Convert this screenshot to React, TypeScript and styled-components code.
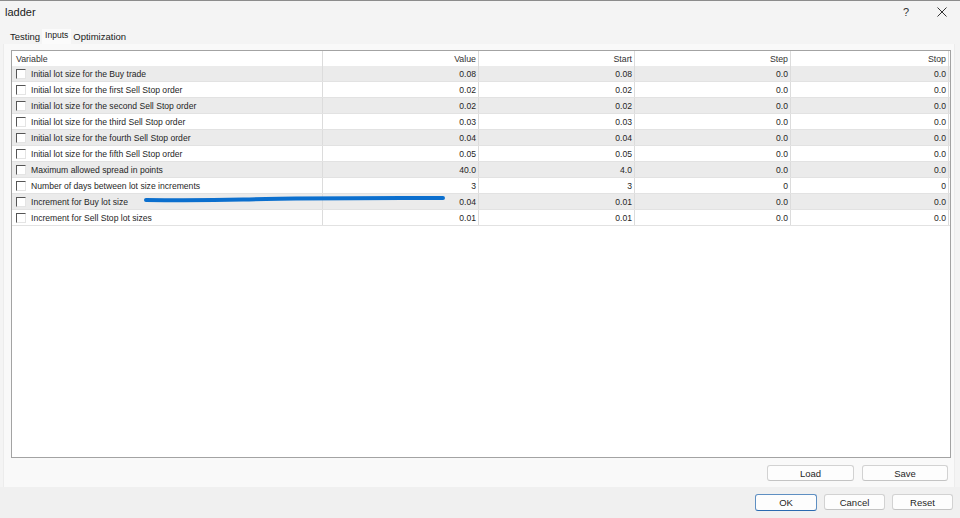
import styled, { createGlobalStyle } from "styled-components";

const GlobalStyle = createGlobalStyle`
  html, body {
    margin: 0;
    padding: 0;
    background: #f0f0f0;
  }
  body {
    font-family: "Liberation Sans", Arial, sans-serif;
    color: #1f1f1f;
  }
`;

type Row = {
  name: string;
  value: string;
  start: string;
  step: string;
  stop: string;
};

const rows: Row[] = [
  { name: "Initial lot size for the Buy trade", value: "0.08", start: "0.08", step: "0.0", stop: "0.0" },
  { name: "Initial lot size for the first Sell Stop order", value: "0.02", start: "0.02", step: "0.0", stop: "0.0" },
  { name: "Initial lot size for the second Sell Stop order", value: "0.02", start: "0.02", step: "0.0", stop: "0.0" },
  { name: "Initial lot size for the third Sell Stop order", value: "0.03", start: "0.03", step: "0.0", stop: "0.0" },
  { name: "Initial lot size for the fourth Sell Stop order", value: "0.04", start: "0.04", step: "0.0", stop: "0.0" },
  { name: "Initial lot size for the fifth Sell Stop order", value: "0.05", start: "0.05", step: "0.0", stop: "0.0" },
  { name: "Maximum allowed spread in points", value: "40.0", start: "4.0", step: "0.0", stop: "0.0" },
  { name: "Number of days between lot size increments", value: "3", start: "3", step: "0", stop: "0" },
  { name: "Increment for Buy lot size", value: "0.04", start: "0.01", step: "0.0", stop: "0.0" },
  { name: "Increment for Sell Stop lot sizes", value: "0.01", start: "0.01", step: "0.0", stop: "0.0" },
];

const Window = styled.div`
  width: 960px;
  height: 518px;
  box-sizing: border-box;
  border-top: 1px solid #8c8c8c;
  display: flex;
  flex-direction: column;
  background: #f4f4f4;
  overflow: hidden;
`;

const TitleBar = styled.div`
  height: 22px;
  display: flex;
  align-items: center;
  padding: 0 0 0 5px;
  font-size: 11px;
  color: #1a1a1a;
`;

const Title = styled.span`
  flex: 1;
`;

const TitleButton = styled.div`
  width: 36px;
  height: 22px;
  display: flex;
  align-items: center;
  justify-content: center;
  font-size: 11px;
  color: #333;
`;

const TabStrip = styled.div`
  height: 21px;
  display: flex;
  align-items: flex-end;
  padding-left: 8px;
`;

const Tab = styled.div<{ $active?: boolean }>`
  height: ${({ $active }) => ($active ? "16px" : "14px")};
  padding: ${({ $active }) => ($active ? "0 3px 2px" : "0 2px 0")};
  display: flex;
  align-items: ${({ $active }) => ($active ? "flex-start" : "center")};
  font-size: ${({ $active }) => ($active ? "8.5px" : "9.5px")};
  background: ${({ $active }) => ($active ? "#fbfbfb" : "transparent")};
  box-sizing: border-box;
  color: #1a1a1a;
  margin-bottom: ${({ $active }) => ($active ? "-1px" : "0")};
  line-height: 12px;
`;

const Panel = styled.div`
  margin: 0 5px 0 3px;
  height: 443px;
  box-sizing: border-box;
  background: #f9f9f9;
  border-left: 1px solid #ececec;
  border-right: 1px solid #ececec;
  padding: 6px 3px 0 7px;
  display: flex;
  flex-direction: column;
`;

const Table = styled.div`
  position: relative;
  width: 940px;
  height: 408px;
  box-sizing: border-box;
  border: 1px solid #a3a3a3;
  background: #ffffff;
  font-size: 8.6px;
`;

const Line = styled.div<{ $shade?: boolean }>`
  display: grid;
  grid-template-columns: 311px 156px 156px 156px 158px;
  height: 16px;
  box-sizing: border-box;
  border-bottom: 1px solid #e2e2e2;
  background: ${({ $shade }) => ($shade ? "#ebebeb" : "#ffffff")};
`;

const HeaderLine = styled(Line)`
  height: 15px;
  border-bottom: none;
  color: #333;
  font-size: 8.8px;
`;

const Cell = styled.div<{ $left?: boolean }>`
  display: flex;
  align-items: center;
  justify-content: ${({ $left }) => ($left ? "flex-start" : "flex-end")};
  padding: ${({ $left }) => ($left ? "0 0 0 4px" : "0 2px 0 0")};
  border-right: 1px solid #dcdcdc;
  white-space: nowrap;
  overflow: hidden;
`;

const Check = styled.span`
  width: 10px;
  height: 10px;
  box-sizing: border-box;
  border: 1px solid;
  border-color: #555555 #e4e4e4 #e4e4e4 #555555;
  background: #ffffff;
  margin-right: 5px;
  flex-shrink: 0;
`;

const Marker = styled.svg`
  position: absolute;
  left: 131px;
  top: 143px;
  pointer-events: none;
`;

const ButtonRow = styled.div<{ $gap: number }>`
  display: flex;
  justify-content: flex-end;
  gap: ${({ $gap }) => $gap}px;
`;

const PanelButtons = styled(ButtonRow)`
  margin-top: 7px;
  padding-right: 3px;
`;

const Footer = styled(ButtonRow)`
  flex: 1;
  background: #f0f0f0;
  padding: 7px 7px 0 0;
  align-items: flex-start;
`;

const Button = styled.button<{ $w: number; $primary?: boolean }>`
  width: ${({ $w }) => $w}px;
  height: ${({ $primary }) => ($primary ? "17px" : "16px")};
  box-sizing: border-box;
  border: 1px solid ${({ $primary }) => ($primary ? "#5e8fc2" : "#d2d2d2")};
  border-bottom-color: ${({ $primary }) => ($primary ? "#2a6ab0" : "#c4c4c4")};
  border-radius: 3px;
  background: #fdfdfd;
  font-family: "Liberation Sans", Arial, sans-serif;
  font-size: 9.5px;
  color: #1f1f1f;
  padding: 0;
  display: flex;
  align-items: center;
  justify-content: center;
`;

export default function App() {
  return (
    <>
      <GlobalStyle />
      <Window>
        <TitleBar>
          <Title>ladder</Title>
          <TitleButton>?</TitleButton>
          <TitleButton>
            <svg width="10" height="10" viewBox="0 0 10 10">
              <path d="M0.5 0.5 L9.5 9.5 M9.5 0.5 L0.5 9.5" stroke="#333" strokeWidth="1" />
            </svg>
          </TitleButton>
        </TitleBar>
        <TabStrip>
          <Tab>Testing</Tab>
          <Tab $active>Inputs</Tab>
          <Tab>Optimization</Tab>
        </TabStrip>
        <Panel>
          <Table>
            <HeaderLine>
              <Cell $left>Variable</Cell>
              <Cell>Value</Cell>
              <Cell>Start</Cell>
              <Cell>Step</Cell>
              <Cell>Stop</Cell>
            </HeaderLine>
            {rows.map((r, i) => (
              <Line key={r.name} $shade={i % 2 === 0}>
                <Cell $left>
                  <Check />
                  {r.name}
                </Cell>
                <Cell>{r.value}</Cell>
                <Cell>{r.start}</Cell>
                <Cell>{r.step}</Cell>
                <Cell>{r.stop}</Cell>
              </Line>
            ))}
            <Marker width="304" height="10" viewBox="0 0 304 10">
              <path
                d="M3 6 C 40 6.5, 70 6.3, 100 5.5 C 150 4, 230 4.2, 300 4"
                stroke="#0b6fce"
                strokeWidth="4"
                strokeLinecap="round"
                fill="none"
              />
            </Marker>
          </Table>
          <PanelButtons $gap={8}>
            <Button $w={87}>Load</Button>
            <Button $w={86}>Save</Button>
          </PanelButtons>
        </Panel>
        <Footer $gap={7}>
          <Button $w={62} $primary>
            OK
          </Button>
          <Button $w={61}>Cancel</Button>
          <Button $w={61}>Reset</Button>
        </Footer>
      </Window>
    </>
  );
}
